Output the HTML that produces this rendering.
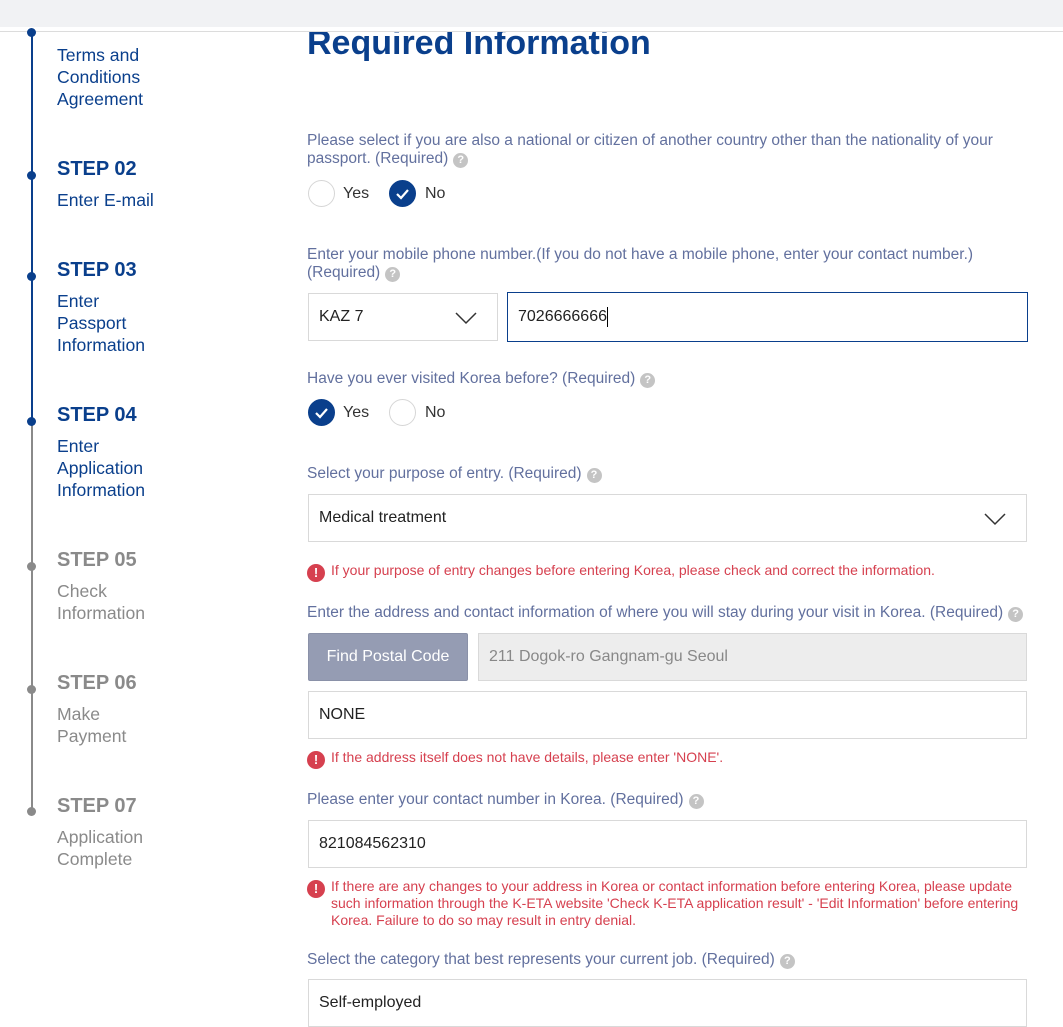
<!DOCTYPE html>
<html><head><meta charset="utf-8"><style>
*{margin:0;padding:0;box-sizing:border-box}
body{width:1063px;height:1001px;overflow:hidden;background:#fff;font-family:"Liberation Sans",Arial,sans-serif;position:relative}
.a{position:absolute}
.top{left:0;top:0;width:1063px;height:27px;background:#f1f2f4}
.hl{left:0;top:31px;width:1063px;height:1px;background:#dcdcdc}
.st{font-weight:bold;font-size:20px;color:#0a3f8c;left:57px}
.sd{font-size:17.6px;line-height:22px;color:#0a3f8c;left:57px}
.g{color:#8a8a8a!important}
.dot{width:9px;height:9px;border-radius:50%;background:#0a3f8c;left:27px}
.dg{background:#8a8a8a}
.lab{left:307px;font-size:15.5px;line-height:18px;color:#62709e}
.q{display:inline-block;width:15px;height:15px;border-radius:50%;background:#c4c4c4;color:#fff;font-size:11px;line-height:15px;text-align:center;font-weight:bold;vertical-align:0px;margin-left:5px}
.box{border:1px solid #d9d9d9;background:#fff;font-size:16px;color:#222;padding-left:10px;display:flex;align-items:center}
.rad{width:27px;height:27px;border-radius:50%;border:1px solid #d6d6d6;background:#fff}
.on{background:#0a3f8c;border-color:#0a3f8c}
.rt{font-size:16px;color:#333}
.err{left:307px;font-size:14px;line-height:17px;color:#d6404f}
.ei{position:absolute;left:0;top:1px;width:18px;height:18px;border-radius:50%;background:#d6404f;color:#fff;font-weight:bold;font-size:13px;line-height:18px;text-align:center}
.chev{position:absolute;right:16px;top:50%;margin-top:-10px}
</style></head><body>
<div class="a top"></div>
<div class="a hl"></div>
<div class="a" style="left:31px;top:31px;width:2px;height:390px;background:#0a3f8c"></div>
<div class="a" style="left:31px;top:421px;width:2px;height:390px;background:#8a8a8a"></div>
<div class="a dot" style="top:28px"></div>
<div class="a sd" style="top:44px">Terms and<br>Conditions<br>Agreement</div>
<div class="a dot" style="top:171px"></div><div class="a st" style="top:158px">STEP 02</div><div class="a sd" style="top:189px">Enter E-mail</div>
<div class="a dot" style="top:272px"></div><div class="a st" style="top:259px">STEP 03</div><div class="a sd" style="top:290px">Enter<br>Passport<br>Information</div>
<div class="a dot" style="top:417px"></div><div class="a st" style="top:404px">STEP 04</div><div class="a sd" style="top:435px">Enter<br>Application<br>Information</div>
<div class="a dot dg" style="top:562px"></div><div class="a st g" style="top:549px">STEP 05</div><div class="a sd g" style="top:580px">Check<br>Information</div>
<div class="a dot dg" style="top:685px"></div><div class="a st g" style="top:672px">STEP 06</div><div class="a sd g" style="top:703px">Make<br>Payment</div>
<div class="a dot dg" style="top:807px"></div><div class="a st g" style="top:795px">STEP 07</div><div class="a sd g" style="top:826px">Application<br>Complete</div>

<div class="a" style="left:307px;top:32px;height:30px;overflow:hidden;width:500px"><div style="margin-top:-11px;font-size:34px;font-weight:bold;color:#0a3f8c;line-height:44px">Required Information</div></div>

<div class="a lab" style="top:132px;width:710px">Please select if you are also a national or citizen of another country other than the nationality of your passport. (Required)<span class="q">?</span></div>
<div class="a rad" style="left:308px;top:180px"></div><div class="a rt" style="left:343px;top:185px">Yes</div>
<div class="a rad on" style="left:389px;top:180px"><svg width="27" height="27" style="position:absolute;left:-1px;top:-1px"><path d="M8 14l4 4 7-8" stroke="#fff" stroke-width="2.2" fill="none"/></svg></div><div class="a rt" style="left:425px;top:185px">No</div>

<div class="a lab" style="top:246px;width:710px">Enter your mobile phone number.(If you do not have a mobile phone, enter your contact number.) (Required)<span class="q">?</span></div>
<div class="a box" style="left:308px;top:293px;width:190px;height:48px">KAZ 7<svg class="chev" width="22" height="20" style="right:20px"><path d="M1 6l10 10 10-10" stroke="#333" stroke-width="1.5" fill="none"/></svg></div>
<div class="a box" style="left:507px;top:292px;width:521px;height:50px;border-color:#0a3f8c">7026666666<span style="display:inline-block;width:1px;height:20px;background:#000"></span></div>

<div class="a lab" style="top:370px">Have you ever visited Korea before? (Required)<span class="q">?</span></div>
<div class="a rad on" style="left:308px;top:399px"><svg width="27" height="27" style="position:absolute;left:-1px;top:-1px"><path d="M8 14l4 4 7-8" stroke="#fff" stroke-width="2.2" fill="none"/></svg></div><div class="a rt" style="left:343px;top:404px">Yes</div>
<div class="a rad" style="left:389px;top:399px"></div><div class="a rt" style="left:425px;top:404px">No</div>

<div class="a lab" style="top:465px">Select your purpose of entry. (Required)<span class="q">?</span></div>
<div class="a box" style="left:308px;top:494px;width:719px;height:48px">Medical treatment<svg class="chev" width="22" height="20" style="right:20px"><path d="M1 6l10 10 10-10" stroke="#333" stroke-width="1.5" fill="none"/></svg></div>
<div class="a err" style="top:562px"><span class="ei" style="top:2px">!</span><span style="padding-left:24px">If your purpose of entry changes before entering Korea, please check and correct the information.</span></div>

<div class="a lab" style="top:604px">Enter the address and contact information of where you will stay during your visit in Korea. (Required)<span class="q">?</span></div>
<div class="a" style="left:308px;top:633px;width:160px;height:48px;background:#959cb3;border:1px solid #8a91a8;border-radius:2px;color:#fff;font-size:16px;display:flex;align-items:center;justify-content:center">Find Postal Code</div>
<div class="a box" style="left:478px;top:633px;width:549px;height:48px;background:#ededed;color:#888">211 Dogok-ro Gangnam-gu Seoul</div>
<div class="a box" style="left:308px;top:691px;width:719px;height:48px">NONE</div>
<div class="a err" style="top:749px"><span class="ei" style="top:2px">!</span><span style="padding-left:24px">If the address itself does not have details, please enter 'NONE'.</span></div>

<div class="a lab" style="top:791px">Please enter your contact number in Korea. (Required)<span class="q">?</span></div>
<div class="a box" style="left:308px;top:820px;width:719px;height:48px">821084562310</div>
<div class="a err" style="top:878px;width:720px"><span class="ei" style="top:2px">!</span><div style="padding-left:24px">If there are any changes to your address in Korea or contact information before entering Korea, please update such information through the K-ETA website 'Check K-ETA application result' - 'Edit Information' before entering Korea. Failure to do so may result in entry denial.</div></div>

<div class="a lab" style="top:951px">Select the category that best represents your current job. (Required)<span class="q">?</span></div>
<div class="a box" style="left:308px;top:979px;width:719px;height:48px;align-items:flex-start;padding-top:14px">Self-employed</div>
</body></html>
